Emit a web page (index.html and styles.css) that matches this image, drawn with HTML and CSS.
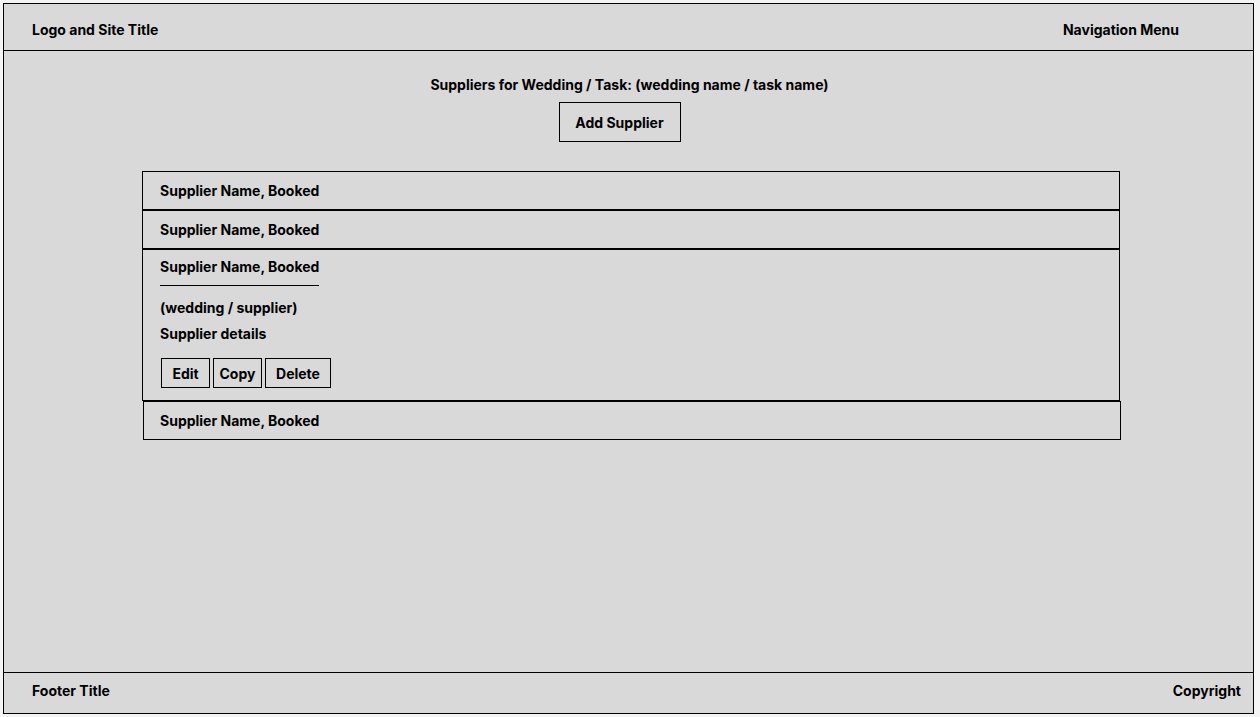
FILE: index.html
```html
<!DOCTYPE html>
<html lang="en">
<head>
<meta charset="utf-8">
<title>Suppliers</title>
<link rel="stylesheet" href="styles.css">
</head>
<body>
<div class="page">
  <header class="site-header">
    <div class="site-title">Logo and Site Title</div>
    <nav class="site-nav">Navigation Menu</nav>
  </header>
  <main class="content">
    <h1 class="page-title">Suppliers for Wedding / Task: (wedding name / task name)</h1>
    <button class="add-btn">Add Supplier</button>
    <ul class="supplier-list">
      <li class="supplier-row">Supplier Name, Booked</li>
      <li class="supplier-row">Supplier Name, Booked</li>
      <li class="supplier-row expanded">
        <div class="supplier-head">Supplier Name, Booked</div>
        <div class="supplier-sub">(wedding / supplier)</div>
        <div class="supplier-details">Supplier details</div>
        <div class="actions">
          <button class="act act-edit">Edit</button>
          <button class="act act-copy">Copy</button>
          <button class="act act-delete">Delete</button>
        </div>
      </li>
      <li class="supplier-row shifted">Supplier Name, Booked</li>
    </ul>
  </main>
  <footer class="site-footer">
    <div class="footer-title">Footer Title</div>
    <div class="copyright">Copyright</div>
  </footer>
</div>
</body>
</html>
```
FILE: styles.css
```css
* { box-sizing: border-box; }
html, body { margin: 0; padding: 0; }
body {
  background: #f4f4f4;
  font-family: Inter, "Liberation Sans", Arial, sans-serif;
  font-size: 14px;
  font-weight: 700;
  color: #000;
  line-height: 17px;
}
.page {
  margin: 3px;
  width: 1251px;
  height: 711px;
  border: 1px solid #000;
  background: #d9d9d9;
  display: flex;
  flex-direction: column;
}
.site-header {
  height: 47px;
  border-bottom: 1px solid #000;
  display: flex;
  align-items: center;
  justify-content: space-between;
  padding: 4px 74px 0 28px;
}
.content {
  flex: 1;
  display: flex;
  flex-direction: column;
  align-items: center;
  padding-top: 25px;
}
.page-title {
  margin: 0 0 0 2px;
  font-size: 14px;
  font-weight: 700;
  line-height: 17px;
}
.add-btn {
  margin-top: 9px;
  margin-right: 18px;
  width: 122px;
  height: 40px;
  border: 1px solid #000;
  background: transparent;
  font: inherit;
  color: #000;
  padding: 0;
}
.supplier-list {
  list-style: none;
  margin: 29px 0 0 5px;
  padding: 0;
  width: 978px;
}
.supplier-row {
  border: 1px solid #000;
  height: 39px;
  display: flex;
  align-items: center;
  padding-left: 17px;
}
.supplier-row.expanded {
  height: 152px;
  display: block;
  padding-top: 8px;
}
.supplier-row.shifted {
  margin-left: 1px;
  width: 978px;
  padding-left: 16px;
}
.supplier-head {
  display: inline-block;
  padding-bottom: 10px;
  border-bottom: 1px solid #000;
}
.supplier-sub {
  margin-top: 13px;
}
.supplier-details {
  margin-top: 9px;
}
.actions {
  margin-top: 16px;
  margin-left: 1px;
  display: flex;
  gap: 3px;
}
.act {
  height: 30px;
  border: 1px solid #000;
  background: transparent;
  font: inherit;
  color: #000;
  padding: 0;
  text-align: center;
}
.act-edit { width: 49px; }
.act-copy { width: 49px; }
.act-delete { width: 66px; }
.site-footer {
  height: 41px;
  border-top: 1px solid #000;
  display: flex;
  align-items: center;
  justify-content: space-between;
  padding: 0 12px 6px 28px;
}
```
